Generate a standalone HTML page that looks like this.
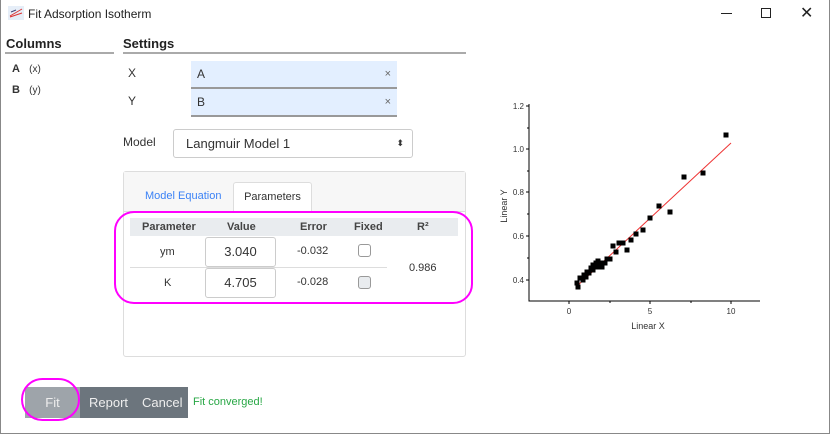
<!DOCTYPE html>
<html><head><meta charset="utf-8"><style>
*{box-sizing:border-box}
body{margin:0;width:830px;height:434px;overflow:hidden;background:#fff;font-family:"Liberation Sans",sans-serif;color:#333;position:relative}
.a{position:absolute}
.win{position:absolute;left:0;top:0;width:830px;height:434px;border:1px solid #888;border-top:none}
.h{font-size:13px;font-weight:bold;color:#222}
.fld{background:#e3efff;border-bottom:2px solid #999;font-size:12px;padding:0 0 0 6px;line-height:26px;color:#333}
.x{position:absolute;right:6px;top:0;font-size:11px;color:#666}
</style></head><body>
<div class="win"></div>
<svg class="a" style="left:8px;top:6px" width="16" height="14"><rect width="16" height="14" fill="#e6eef8"/><path d="M2 10 L14 3 M2 11 L14 7" stroke="#d33" stroke-width="1"/><path d="M3 6 L8 4" stroke="#447" stroke-width="1"/></svg>
<div class="a" style="left:28px;top:7px;font-size:12px;color:#222">Fit Adsorption Isotherm</div>
<div class="a" style="left:721px;top:13px;width:11px;height:1px;background:#222"></div>
<div class="a" style="left:761px;top:8px;width:10px;height:10px;border:1px solid #222"></div>
<div class="a" style="left:800px;top:3px;font-size:16px;color:#222">✕</div>

<div class="a h" style="left:6px;top:36px">Columns</div>
<div class="a" style="left:5px;top:52px;width:109px;height:2px;background:#aaa"></div>
<div class="a" style="left:12px;top:63px;font-size:11px"><b>A</b>&nbsp;&nbsp;&nbsp;<span style="font-size:10px">(x)</span></div>
<div class="a" style="left:12px;top:84px;font-size:11px"><b>B</b>&nbsp;&nbsp;&nbsp;<span style="font-size:10px">(y)</span></div>

<div class="a h" style="left:123px;top:36px">Settings</div>
<div class="a" style="left:123px;top:52px;width:343px;height:2px;background:#aaa"></div>
<div class="a" style="left:128px;top:66px;font-size:12px">X</div>
<div class="a" style="left:128px;top:94px;font-size:12px">Y</div>
<div class="a fld" style="left:191px;top:61px;width:206px;height:28px">A<span class="x">×</span></div>
<div class="a fld" style="left:191px;top:89px;width:206px;height:28px">B<span class="x">×</span></div>
<div class="a" style="left:123px;top:135px;font-size:12px">Model</div>
<div class="a" style="left:173px;top:129px;width:240px;height:29px;border:1px solid #ccc;border-radius:3px;font-size:13px;line-height:27px;padding-left:12px">Langmuir Model 1<span style="position:absolute;right:8px;top:0;font-size:9px">⬍</span></div>

<div class="a" style="left:123px;top:171px;width:343px;height:186px;border:1px solid #ddd;border-radius:3px;background:#fff"></div>
<div class="a" style="left:124px;top:172px;width:341px;height:40px;background:#f7f7f7;border-bottom:1px solid #ddd"></div>
<div class="a" style="left:145px;top:190px;font-size:11px;color:#3b82f6">Model Equation</div>
<div class="a" style="left:233px;top:182px;width:79px;height:31px;background:#fff;border:1px solid #ddd;border-bottom:none;border-radius:3px 3px 0 0;font-size:11px;text-align:center;line-height:28px">Parameters</div>

<div class="a" style="left:130px;top:218px;width:328px;height:18px;background:#e9ecef"></div>
<div class="a" style="left:142px;top:221px;font-size:11px;font-weight:bold;color:#444">Parameter</div>
<div class="a" style="left:227px;top:221px;font-size:11px;font-weight:bold;color:#444">Value</div>
<div class="a" style="left:300px;top:221px;font-size:11px;font-weight:bold;color:#444">Error</div>
<div class="a" style="left:354px;top:221px;font-size:11px;font-weight:bold;color:#444">Fixed</div>
<div class="a" style="left:417px;top:221px;font-size:11px;font-weight:bold;color:#444">R²</div>
<div class="a" style="left:130px;top:267px;width:257px;height:1px;background:#ddd"></div>
<div class="a" style="left:160px;top:246px;font-size:11px">ym</div>
<div class="a" style="left:164px;top:277px;font-size:11px">K</div>
<div class="a" style="left:205px;top:237px;width:71px;height:30px;border:1px solid #ccc;border-radius:3px;font-size:13px;text-align:center;line-height:28px">3.040</div>
<div class="a" style="left:205px;top:268px;width:71px;height:30px;border:1px solid #ccc;border-radius:3px;font-size:13px;text-align:center;line-height:28px">4.705</div>
<div class="a" style="left:297px;top:245px;font-size:11px">-0.032</div>
<div class="a" style="left:297px;top:276px;font-size:11px">-0.028</div>
<div class="a" style="left:358px;top:244px;width:13px;height:13px;border:1px solid #999;border-radius:3px;background:#fff"></div>
<div class="a" style="left:358px;top:276px;width:13px;height:13px;border:1px solid #999;border-radius:3px;background:#e9ecef"></div>
<div class="a" style="left:409px;top:262px;font-size:11px">0.986</div>
<div class="a" style="left:114px;top:211px;width:359px;height:93px;border:2px solid #f0f;border-radius:20px"></div>

<div class="a" style="left:25px;top:387px;width:55px;height:31px;background:#9ea4aa;color:#eee;font-size:13px;text-align:center;line-height:31px">Fit</div>
<div class="a" style="left:80px;top:387px;width:108px;height:31px;background:#6c757d;color:#eee;font-size:13px;line-height:31px"><span style="margin-left:9px">Report</span><span style="margin-left:14px">Cancel</span></div>
<div class="a" style="left:193px;top:396px;font-size:11px;color:#28a745">Fit converged!</div>
<div class="a" style="left:21px;top:378px;width:59px;height:43px;border:2px solid #f0f;border-radius:22px"></div>

<svg class="a" style="left:480px;top:90px" width="300" height="250" font-family="Liberation Sans,sans-serif">
<g transform="translate(-480,-90)">
<path d="M529 104 V301 H760" stroke="#000" fill="none"/>
<g stroke="#000">
<path d="M526 106H529M526 149H529M526 192H529M526 236H529M526 280H529M527 128H529M527 171H529M527 214H529M527 258H529"/>
<path d="M569 301V304M650 301V304M731 301V304M610 301V303M691 301V303"/>
</g>
<g font-size="8" fill="#333" text-anchor="end">
<text x="524" y="109">1.2</text><text x="524" y="152">1.0</text><text x="524" y="195">0.8</text><text x="524" y="239">0.6</text><text x="524" y="283">0.4</text>
</g>
<g font-size="8" fill="#333" text-anchor="middle">
<text x="569" y="314">0</text><text x="650" y="314">5</text><text x="731" y="314">10</text>
<text x="648" y="329" font-size="9">Linear X</text>
</g>
<text x="507" y="206" font-size="9" fill="#333" transform="rotate(-90 507 206)" text-anchor="middle">Linear Y</text>
<line x1="576" y1="287" x2="731" y2="143" stroke="#e33" stroke-width="1"/>
<g fill="#000" transform="translate(0.5,0.5)">
<rect x="723" y="132" width="5" height="5"/><rect x="700" y="170" width="5" height="5"/><rect x="681" y="174" width="5" height="5"/>
<rect x="656" y="203" width="5" height="5"/><rect x="667" y="209" width="5" height="5"/><rect x="647" y="215" width="5" height="5"/>
<rect x="640" y="227" width="5" height="5"/><rect x="633" y="231" width="5" height="5"/><rect x="628" y="237" width="5" height="5"/>
<rect x="624" y="247" width="5" height="5"/><rect x="620" y="240" width="5" height="5"/><rect x="616" y="240" width="5" height="5"/>
<rect x="613" y="249" width="5" height="5"/><rect x="610" y="243" width="5" height="5"/><rect x="607" y="256" width="5" height="5"/>
<rect x="604" y="256" width="5" height="5"/><rect x="602" y="260" width="5" height="5"/><rect x="598" y="260" width="5" height="5"/>
<rect x="595" y="258" width="5" height="5"/><rect x="593" y="260" width="5" height="5"/><rect x="590" y="262" width="5" height="5"/>
<rect x="588" y="265" width="5" height="5"/><rect x="584" y="269" width="5" height="5"/><rect x="581" y="272" width="5" height="5"/>
<rect x="577" y="275" width="5" height="5"/><rect x="574" y="280" width="5" height="5"/><rect x="575" y="284" width="5" height="5"/>
<rect x="580" y="277" width="5" height="5"/><rect x="583" y="274" width="5" height="5"/><rect x="586" y="270" width="5" height="5"/>
<rect x="590" y="267" width="5" height="5"/><rect x="594" y="264" width="5" height="5"/><rect x="599" y="264" width="5" height="5"/>
</g>
</g>
</svg>
</body></html>
